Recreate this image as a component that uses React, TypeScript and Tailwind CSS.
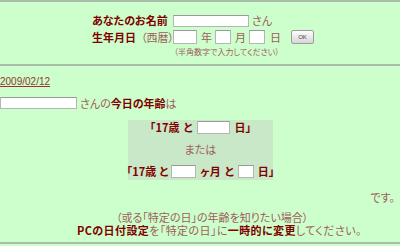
const dark = "text-[#800000] font-bold";
const light = "text-[#a05c5c]";

const Field = ({ w, h = "h-[13px]" }: { w: string; h?: string }) => (
  <input
    type="text"
    className={`${w} ${h} shrink-0 bg-white border border-[#b5b5b5] border-t-[#9a9a9a] outline-none`}
  />
);

const App = () => {
  return (
    <div className="w-[400px] h-[246px] overflow-hidden bg-[#ccffcc] font-['Noto_Sans_CJK_JP',sans-serif] [font-feature-settings:'palt'] leading-none text-[11px] whitespace-nowrap">
      <div className="h-[2px] bg-[#a9bda9]" />

      <div className="h-[62px] pl-[92px] pt-[12px]">
        <div className="flex items-center h-[13px]">
          <span className={`w-[81px] ${dark}`}>あなたのお名前</span>
          <Field w="w-[76px]" h="h-[12px]" />
          <span className={`ml-[3px] ${light}`}>さん</span>
        </div>
        <div className="flex items-center h-[14px] mt-[3px]">
          <span className="w-[81px] flex items-center">
            <span className={dark}>生年月日</span>
            <span className={`ml-[5px] ${light}`}>（西暦）</span>
          </span>
          <Field w="w-[24px]" h="h-[14px]" />
          <span className={`ml-[4px] ${light}`}>年</span>
          <span className="ml-[3px] flex">
            <Field w="w-[16px]" h="h-[14px]" />
          </span>
          <span className={`ml-[4px] ${light}`}>月</span>
          <span className="ml-[3px] flex">
            <Field w="w-[16px]" h="h-[14px]" />
          </span>
          <span className={`ml-[5px] ${light}`}>日</span>
          <button className="ml-[10px] w-[23px] h-[14px] rounded-[2px] border border-[#9c9c9c] bg-gradient-to-b from-[#fdfdfd] to-[#d6d6d6] text-[6px] text-[#444] font-['Liberation_Sans',sans-serif]">
            OK
          </button>
        </div>
        <div className={`pl-[82px] mt-[4px] text-[8px] ${light}`}>
          （半角数字で入力してください）
        </div>
      </div>

      <div className="h-[2px] bg-[#a9bda9]" />

      <div className="mt-[11px] h-[10px] flex">
        <span className="text-[10px] underline text-[#993333] font-['Liberation_Sans',sans-serif]">
          2009/02/12
        </span>
      </div>

      <div className="mt-[10px] flex items-center h-[12px]">
        <Field w="w-[77px]" h="h-[12px]" />
        <span className="ml-[3px]">
          <span className={light}>さんの</span>
          <span className={dark}>今日の年齢</span>
          <span className={light}>は</span>
        </span>
      </div>

      <div className="mt-[11px] ml-[128px] w-[145px] h-[60px] bg-[#c8e8c8] pt-[1px]">
        <div className={`flex items-center justify-center h-[13px] ${dark}`}>
          <span>「17歳</span>
          <span className="ml-[4px]">と</span>
          <span className="ml-[4px] flex">
            <Field w="w-[33px]" />
          </span>
          <span className="ml-[5px]">日」</span>
        </div>
        <div className={`mt-[9px] h-[12px] flex items-center justify-center ${light}`}>または</div>
        <div className={`mt-[10px] flex items-center justify-center h-[13px] ${dark}`}>
          <span>「17歳</span>
          <span className="ml-[3px]">と</span>
          <span className="ml-[3px] flex">
            <Field w="w-[25px]" />
          </span>
          <span className="ml-[4px]">ヶ月</span>
          <span className="ml-[4px]">と</span>
          <span className="ml-[4px] flex">
            <Field w="w-[16px]" />
          </span>
          <span className="ml-[4px]">日」</span>
        </div>
      </div>

      <div className={`mt-[12px] h-[12px] flex justify-end pr-[5px] ${light}`}>です。</div>

      <div className={`mt-[7px] h-[12px] flex items-center pl-[116px] ${light}`}>
        （或る「特定の日」の年齢を知りたい場合）
      </div>
      <div className="mt-[1px] h-[12px] flex items-center pl-[77px] tracking-[0.4px]">
        <span className={dark}>PCの日付設定</span>
        <span className={light}>を「特定の日」に</span>
        <span className={dark}>一時的に変更</span>
        <span className={light}>してください。</span>
      </div>

      <div className="mt-[6px] h-[2px] bg-[#a9bda9]" />
    </div>
  );
};

export default App;
